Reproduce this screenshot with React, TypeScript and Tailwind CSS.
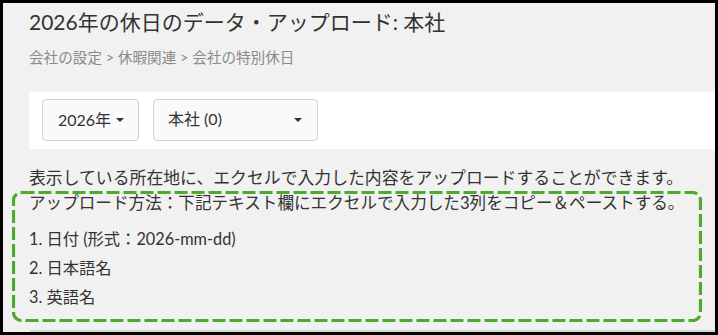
import React from 'react';

const font = { fontFamily: '"Lato", "Noto Sans CJK JP", sans-serif' };

function Caret() {
  return (
    <svg width="8" height="4" viewBox="0 0 8 4" className="inline-block">
      <path d="M0 0 L8 0 L4 4 Z" fill="#333" />
    </svg>
  );
}

export default function App() {
  return (
    <div
      className="w-[718px] h-[335px] border-[3px] border-black bg-[#f1f1f1] overflow-hidden box-border text-[#333]"
      style={font}
    >
      {/* Header */}
      <div className="pl-[26px] pt-[4px]">
        <h1 className="text-[21px] leading-[30px] font-normal text-[#333]">
          2026年の休日のデータ・アップロード: 本社
        </h1>
        <div className="mt-[11px] text-[14.6px] leading-[20px] text-[#8a8a8a]">
          会社の設定 &gt; 休暇関連 &gt; 会社の特別休日
        </div>
      </div>

      {/* Filter bar */}
      <div className="ml-[26px] mt-[24px] h-[57px] bg-white flex items-start gap-[14px] pl-[13px] pt-[7px]">
        <button className="h-[42px] w-[97px] border border-[#d0d4d8] rounded-[4px] bg-[#f9fafb] flex items-center pl-[15px] gap-[5px] text-[16px] text-[#333]">
          <span>2026年</span>
          <Caret />
        </button>
        <button className="h-[42px] w-[165px] border border-[#d0d4d8] rounded-[4px] bg-[#f9fafb] flex items-center justify-between pl-[14px] pr-[15px] text-[16px] text-[#333]">
          <span className="-mt-[3px]">本社 (0)</span>
          <Caret />
        </button>
      </div>

      {/* Description */}
      <p className="pl-[26px] mt-[17px] text-[16.85px] leading-[24px] whitespace-nowrap">
        表示している所在地に、エクセルで入力した内容をアップロードすることができます。
      </p>

      <div className="relative ml-[9px] mt-[1px] w-[690px] h-[131px] pl-[17px] pt-[3px]">
        <svg
          width="690"
          height="131"
          className="absolute left-0 top-0 pointer-events-none"
        >
          <rect
            x="1.5"
            y="1.5"
            width="687"
            height="128"
            rx="8"
            fill="none"
            stroke="#4eaa2e"
            strokeWidth="3.2"
            strokeDasharray="13 4"
          />
        </svg>
        <p className="text-[16.6px] leading-[18px] whitespace-nowrap">
          アップロード方法：下記テキスト欄にエクセルで入力した3列をコピー＆ペーストする。
        </p>
        <ol className="mt-[12px] text-[16.3px] leading-[29px]">
          <li>1. 日付 (形式：2026-mm-dd)</li>
          <li>2. 日本語名</li>
          <li>3. 英語名</li>
        </ol>
      </div>

      <div className="ml-[27px] mt-[8px] border-t-2 border-[#d3d6da]" />
    </div>
  );
}
